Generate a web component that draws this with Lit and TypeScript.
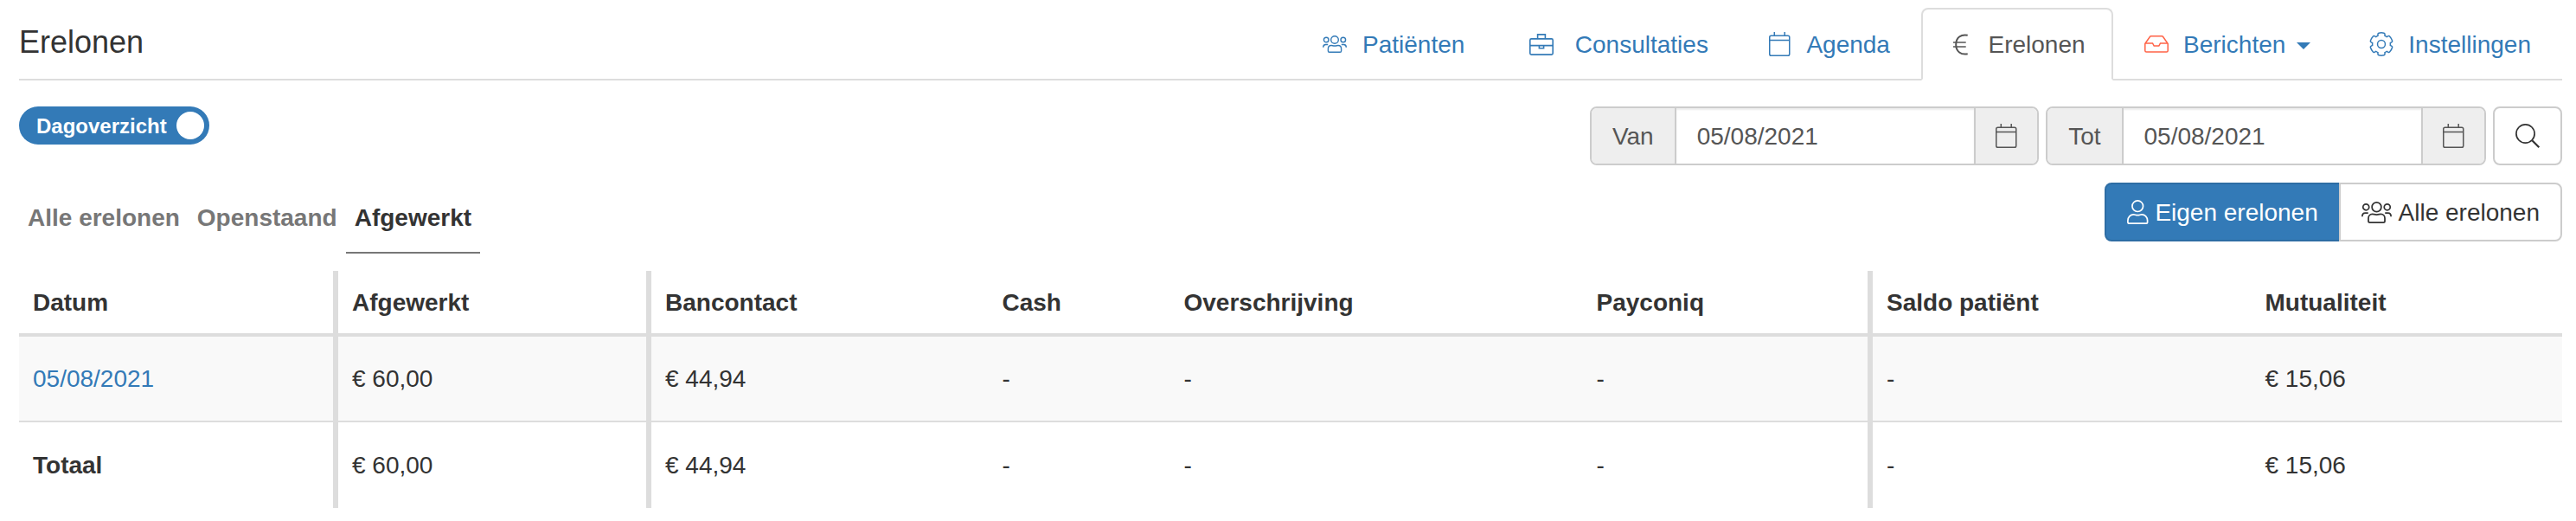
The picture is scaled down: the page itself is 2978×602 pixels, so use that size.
import { LitElement, html, css, svg } from 'lit';
import { customElement, property, state } from 'lit/decorators.js';
import { classMap } from 'lit/directives/class-map.js';

// every icon has its own drawing area and line width, all of them are stroked
const ICONS: Record<string, { w: number; h: number; line: number; art: unknown }> = {
  users: {
    w: 28,
    h: 20,
    line: 1.4,
    art: svg`
      <circle cx="4.2" cy="5" r="2.8" />
      <circle cx="14" cy="5" r="4.3" />
      <circle cx="23.8" cy="5" r="2.8" />
      <path d="M6.4 18v-2.6c0-2.2 1.5-3.9 3.6-3.9 1.3 0 2 .5 4 .5s2.7-.5 4-.5c2.1 0 3.6 1.7 3.6 3.9V18c0 .8-.6 1.3-1.4 1.3H7.8c-.8 0-1.4-.5-1.4-1.3z" />
      <path d="M.7 13.7c0-2 1.200-3.200 2.800-3.200h2.700M27.300 13.700c0-2-1.200-3.200-2.800-3.200h-2.700" />`,
  },
  briefcase: {
    w: 28,
    h: 25,
    line: 1.6,
    art: svg`
      <path d="M9.600 5.900V.9h8.800v5" />
      <rect x=".8" y="5.900" width="26.400" height="18.200" rx="1.500" />
      <path d="M.8 13.600h26.400M11.400 13.600v3.200h5.200v-3.200" />`,
  },
  calendar: {
    w: 24.5,
    h: 28,
    line: 1.5,
    art: svg`
      <rect x=".75" y="4.200" width="23" height="23.100" rx="1.800" />
      <path d="M.8 9.600h23M6.300 0v4.100M18.200 0v4.100" />`,
  },
  euro: {
    w: 17,
    h: 25,
    line: 1.5,
    art: svg`
      <path stroke-width="2" d="M16.700 1.700C9 .2 3.200 4.500 3.200 12.500s5.800 12.300 13.500 10.800" />
      <path d="M0 10h14.700M0 15h14.700" />`,
  },
  inbox: {
    w: 28,
    h: 20,
    line: 1.5,
    art: svg`
      <path d="M.8 9.500 6.400 1.500c.3-.4.7-.7 1.200-.7h12.800c.5 0 .9.300 1.200.7l5.600 8v7.900c0 .9-.6 1.500-1.500 1.500H2.300c-.9 0-1.500-.6-1.500-1.500z" />
      <path d="M1.200 8.900h8.300l1.700 3.200h5.600l1.700-3.200h8.300" />`,
  },
  cog: {
    w: 28,
    h: 28,
    line: 28,
    art: svg`
      <g transform="translate(.4 .4) scale(.0531)">
        <circle cx="256" cy="256" r="84" />
        <path d="M482.700 299.300l-32.600-18.800a195 195 0 0 0 0-48.900l32.600-18.800c9.600-5.500 14.200-16.900 11-27.500-11.200-37.700-31.200-71.700-57.500-99.600-7.600-8.100-19.800-9.800-29.400-4.300l-32.600 18.800a194 194 0 0 0-42.300-24.500V38c0-11.100-7.700-20.800-18.500-23.400-37.600-8.900-77.100-8.900-114.800 0-10.800 2.600-18.500 12.300-18.500 23.400v37.700a194 194 0 0 0-42.300 24.500L105.200 81.400c-9.600-5.600-21.800-3.800-29.400 4.300-26.400 27.900-46.300 61.800-57.500 99.600-3.100 10.600 1.500 22 11 27.500l32.600 18.800a195 195 0 0 0 0 48.900l-32.600 18.800c-9.600 5.500-14.200 16.900-11 27.500 11.200 37.700 31.200 71.700 57.500 99.600 7.600 8.100 19.800 9.800 29.400 4.300l32.600-18.800a194 194 0 0 0 42.300 24.500V474c0 11.100 7.700 20.800 18.500 23.400 37.600 8.900 77.100 8.900 114.800 0 10.800-2.600 18.500-12.300 18.500-23.400v-37.600a194 194 0 0 0 42.300-24.500l32.600 18.800c9.600 5.600 21.800 3.800 29.400-4.300 26.400-27.900 46.300-61.800 57.500-99.600 3.200-10.600-1.400-22-11-27.500z" />
      </g>`,
  },
  user: {
    w: 24.5,
    h: 28,
    line: 1.7,
    art: svg`
      <circle cx="12.250" cy="7.200" r="6.300" />
      <path d="M.9 25.400v-1.600c0-4 3-7 6.600-7 1.700 0 2.400.9 4.750.9s3.050-.9 4.750-.9c3.600 0 6.600 3 6.600 7v1.600c0 1-.8 1.800-1.800 1.800H2.700c-1 0-1.800-.8-1.800-1.800z" />`,
  },
  search: {
    w: 28,
    h: 28,
    line: 1.7,
    art: svg`
      <circle cx="11.500" cy="11.500" r="10.600" />
      <path stroke-width="2.200" d="M19.300 19.300l8 8" />`,
  },
};

@customElement('app-icon')
export class AppIcon extends LitElement {
  @property() name = 'user';
  // 1 is the drawing's own size
  @property({ type: Number }) scale = 1;

  static styles = css`
    :host {
      display: inline-flex;
      flex: none;
    }
    svg {
      display: block;
      fill: none;
      stroke: currentColor;
      overflow: visible;
    }
  `;

  render() {
    const { w, h, line, art } = ICONS[this.name];
    return html`
      <svg
        width=${w * this.scale}
        height=${h * this.scale}
        viewBox="0 0 ${w} ${h}"
        stroke-width=${line}
      >
        ${art}
      </svg>
    `;
  }
}

@customElement('date-field')
export class DateField extends LitElement {
  @property() label = '';
  @property() value = '';

  static styles = css`
    :host {
      display: flex;
      height: 68px;
      box-sizing: border-box;
      border: 2px solid #ccc;
      border-radius: 8px;
      overflow: hidden;
      color: #555;
    }
    .addon {
      display: flex;
      align-items: center;
      padding: 2px 24px 0;
      background: #eee;
    }
    .addon.end {
      padding: 0 23.5px;
    }
    .value {
      width: 320px;
      padding: 13px 0 11px 24px;
      border: solid #ccc;
      border-width: 0 2px;
      background: #fff;
      box-shadow: inset 0 2px 2px rgba(0, 0, 0, 0.075);
    }
  `;

  render() {
    return html`
      <span class="addon">${this.label}</span>
      <span class="value">${this.value}</span>
      <span class="addon end"><app-icon name="calendar"></app-icon></span>
    `;
  }
}

@customElement('app-root')
export class AppRoot extends LitElement {
  @state() page = 'Erelonen';
  @state() tab = 'Afgewerkt';

  menu = [
    { label: 'Patiënten', icon: 'users' },
    { label: 'Consultaties', icon: 'briefcase', wide: true },
    { label: 'Agenda', icon: 'calendar' },
    { label: 'Erelonen', icon: 'euro' },
    { label: 'Berichten', icon: 'inbox', alert: true, dropdown: true },
    { label: 'Instellingen', icon: 'cog' },
  ];

  tabs = ['Alle erelonen', 'Openstaand', 'Afgewerkt'];

  columns = [
    'Datum',
    'Afgewerkt',
    'Bancontact',
    'Cash',
    'Overschrijving',
    'Payconiq',
    'Saldo patiënt',
    'Mutualiteit',
  ];

  amounts = ['€ 60,00', '€ 44,94', '-', '-', '-', '-', '€ 15,06'];

  static styles = css`
    :host {
      display: block;
      padding: 9px 16px 0 22px;
      font-family: 'Liberation Sans', Arial, sans-serif;
      font-size: 28px;
      line-height: 40px;
      color: #333;
      background: #fff;
      white-space: nowrap;
    }

    /* top bar */
    header {
      display: flex;
      justify-content: space-between;
      height: 82px;
      border-bottom: 2px solid #ddd;
    }
    h1 {
      margin: 20px 0 0;
      font-size: 36px;
      font-weight: 400;
    }
    nav {
      display: flex;
    }
    .item {
      display: flex;
      align-items: center;
      box-sizing: border-box;
      height: 84px;
      margin-right: 4px;
      padding: 0 30px;
      border: 2px solid transparent;
      border-radius: 8px 8px 0 0;
      color: #337ab7;
    }
    .item.active {
      color: #555;
      background: #fff;
      border-color: #ddd #ddd #fff;
    }
    /* drops the label a pixel below the centre line */
    .text {
      padding-top: 2px;
    }
    .glyph {
      display: flex;
      justify-content: center;
      width: 28px;
      margin-right: 17.5px;
    }
    .glyph.wide {
      width: 42px;
    }
    .glyph.alert {
      color: tomato;
    }
    .caret {
      margin: 4px 0 0 12.5px;
      border: solid transparent;
      border-top-color: currentColor;
      border-width: 8px 8px 0;
    }

    /* filters */
    .bar {
      display: flex;
      justify-content: space-between;
      align-items: flex-start;
    }
    .filters {
      margin-top: 30px;
    }
    .toggle {
      display: flex;
      align-items: center;
      justify-content: space-between;
      box-sizing: border-box;
      width: 220px;
      height: 44px;
      padding: 0 6px 0 20px;
      border-radius: 22px;
      background: #337ab7;
      color: #fff;
      font-size: 24px;
      font-weight: 700;
    }
    .knob {
      width: 32px;
      height: 32px;
      border-radius: 50%;
      background: #fff;
    }
    .dates {
      display: flex;
      gap: 8px;
    }
    .btn {
      display: flex;
      align-items: center;
      gap: 7.8px;
      box-sizing: border-box;
      height: 68px;
      padding: 0 24px;
      border: 2px solid #ccc;
      border-radius: 8px;
      background: #fff;
    }

    /* tabs and owner switch */
    .switches {
      margin-top: 20px;
    }
    .tabs {
      display: flex;
      margin-top: 20px;
      font-weight: 700;
      color: #777;
    }
    .tab {
      padding: 1px 10px 19px;
      border-bottom: 2px solid transparent;
    }
    .tab.active {
      color: #333;
      border-color: #777;
    }
    .group {
      display: flex;
    }
    .btn.own {
      border-color: #2e6da4;
      border-radius: 8px 0 0 8px;
      background: #337ab7;
      color: #fff;
    }
    .btn.all {
      margin-left: -2px;
      border-radius: 0 8px 8px 0;
    }

    /* overview table */
    .table {
      margin-top: 20px;
    }
    .row {
      display: grid;
      grid-template-columns: 369px 362px 389.5px 210px 477px 335.5px 437.5px 1fr;
    }
    .cell {
      padding: 30px 16px 29px;
    }
    .cell:nth-child(1),
    .cell:nth-child(2),
    .cell:nth-child(6) {
      border-right: 6px solid #ddd;
    }
    .head {
      border-bottom: 4px solid #ddd;
      font-weight: 700;
    }
    .head .cell {
      padding: 17px 16px 15px;
    }
    .day {
      border-bottom: 2px solid #ddd;
      background: #f9f9f9;
    }
    .day .cell {
      padding: 29px 16px 28px;
    }
    .link {
      color: #337ab7;
    }
    .total .cell:first-child {
      font-weight: 700;
    }
  `;

  renderItem(item: any) {
    return html`
      <a class=${classMap({ item: true, active: item.label === this.page })}>
        <span class=${classMap({ glyph: true, wide: !!item.wide, alert: !!item.alert })}>
          <app-icon name=${item.icon}></app-icon>
        </span>
        <span class="text">${item.label}</span>
        ${item.dropdown ? html`<span class="caret"></span>` : ''}
      </a>
    `;
  }

  renderCells(values: unknown[]) {
    return values.map((v) => html`<div class="cell">${v}</div>`);
  }

  render() {
    return html`
      <header>
        <h1>${this.page}</h1>
        <nav>${this.menu.map((item) => this.renderItem(item))}</nav>
      </header>

      <div class="bar filters">
        <div class="toggle">
          <span class="text">Dagoverzicht</span>
          <span class="knob"></span>
        </div>
        <div class="dates">
          <date-field label="Van" value="05/08/2021"></date-field>
          <date-field label="Tot" value="05/08/2021"></date-field>
          <div class="btn"><app-icon name="search"></app-icon></div>
        </div>
      </div>

      <div class="bar switches">
        <div class="tabs">
          ${this.tabs.map(
            (t) => html`<span class=${classMap({ tab: true, active: t === this.tab })}>${t}</span>`
          )}
        </div>
        <div class="group">
          <div class="btn own">
            <app-icon name="user"></app-icon><span class="text">Eigen erelonen</span>
          </div>
          <div class="btn all">
            <app-icon name="users" scale="1.25"></app-icon><span class="text">Alle erelonen</span>
          </div>
        </div>
      </div>

      <div class="table">
        <div class="row head">${this.renderCells(this.columns)}</div>
        <div class="row day">
          ${this.renderCells([html`<a class="link">05/08/2021</a>`, ...this.amounts])}
        </div>
        <div class="row total">${this.renderCells(['Totaal', ...this.amounts])}</div>
      </div>
    `;
  }
}
